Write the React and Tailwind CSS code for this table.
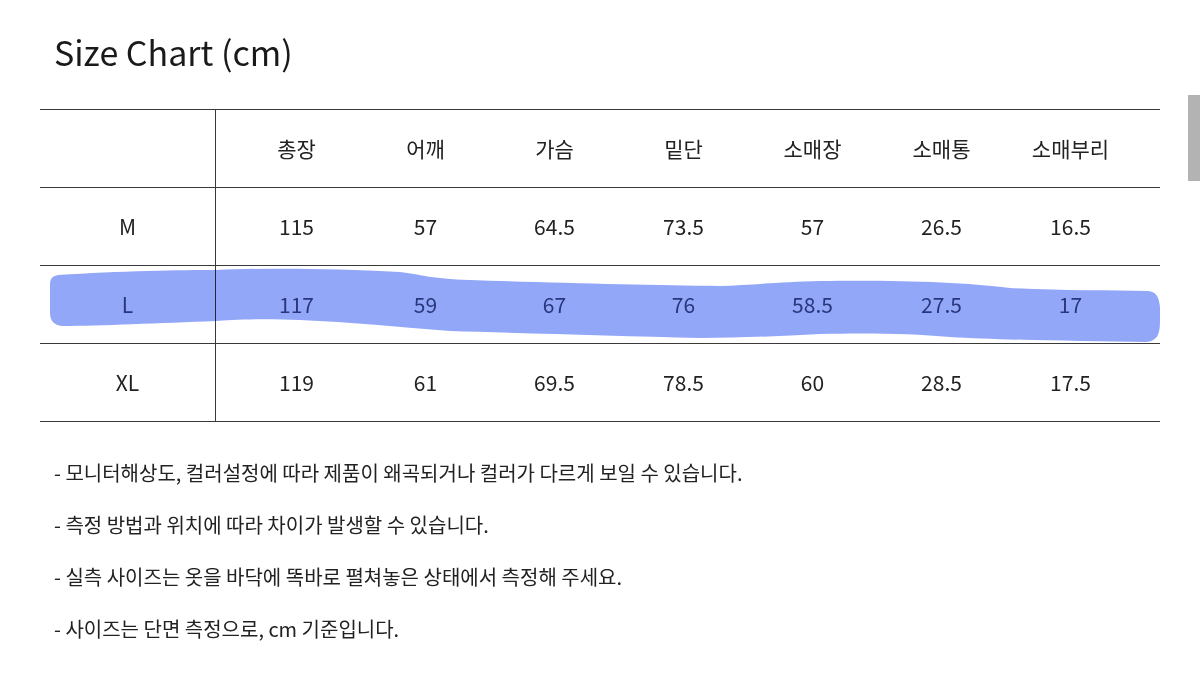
const headers = ['총장', '어깨', '가슴', '밑단', '소매장', '소매통', '소매부리'];

const rows = [
  { size: 'M', values: ['115', '57', '64.5', '73.5', '57', '26.5', '16.5'] },
  { size: 'L', values: ['117', '59', '67', '76', '58.5', '27.5', '17'], marked: true },
  { size: 'XL', values: ['119', '61', '69.5', '78.5', '60', '28.5', '17.5'] },
];

const notes = [
  '- 모니터해상도, 컬러설정에 따라 제품이 왜곡되거나 컬러가 다르게 보일 수 있습니다.',
  '- 측정 방법과 위치에 따라 차이가 발생할 수 있습니다.',
  '- 실측 사이즈는 옷을 바닥에 똑바로 펼쳐놓은 상태에서 측정해 주세요.',
  '- 사이즈는 단면 측정으로, cm 기준입니다.',
];

function Row({ label, cells, marked }) {
  return (
    <div className={`flex h-[78px] border-b border-[#3a3a3a] ${marked ? 'text-[#455281]' : ''}`}>
      <div className="w-[176px] shrink-0 border-r border-[#3a3a3a] flex items-center justify-center">
        {label}
      </div>
      <div className="pl-[16px] grid grid-cols-[repeat(7,129px)] items-center">
        {cells.map((c, i) => (
          <div key={i} className="text-center">{c}</div>
        ))}
      </div>
    </div>
  );
}

// marker stroke drawn over the L row
function Highlight() {
  return (
    <svg
      className="absolute left-0 top-[156px] pointer-events-none mix-blend-multiply"
      width="1120"
      height="80"
      viewBox="40 265 1120 80"
    >
      <path
        d="M58 274 C120 270 180 269 216 269 C260 267 330 267 400 271 C420 273 430 278 470 279 C560 282 650 284 720 285 C750 284 780 281 820 280 C900 279 960 281 1010 287 C1060 290 1110 289 1148 290 C1158 291 1161 298 1160 320 C1160 334 1157 340 1146 341 C1080 340 1000 339 950 336 C910 332 860 332 820 333 C780 335 740 337 700 337 C620 335 520 332 450 330 C400 326 350 321 300 319 C260 317 230 319 216 320 C160 322 100 325 62 325 C54 324 50 320 50 312 L50 284 C50 277 53 275 58 274 Z"
        fill="#93a7f8"
      />
    </svg>
  );
}

export default function App() {
  return (
    <div
      className="relative w-[1200px] h-[683px] bg-white overflow-hidden text-[#222]"
      style={{ fontFamily: '"Noto Sans CJK KR", "Noto Sans", sans-serif' }}
    >
      <div className="pt-[27px] pl-[54px] text-[34px] leading-[50px] text-[#1a1a1a]">
        Size Chart (cm)
      </div>

      <div className="relative mt-[32px] ml-[40px] w-[1120px] border-t border-[#3a3a3a] text-[21px]">
        <Row label="" cells={headers} />
        {rows.map((r) => (
          <Row key={r.size} label={r.size} cells={r.values} marked={r.marked} />
        ))}
        <Highlight />
      </div>

      <div className="mt-[37px] pl-[54px] flex flex-col gap-[25px] text-[20px] leading-[27px] text-[#222]">
        {notes.map((n) => (
          <div key={n}>{n}</div>
        ))}
      </div>

      <div className="absolute right-0 top-[95px] w-[12px] h-[86px] bg-[#b3b3b3]" />
    </div>
  );
}
